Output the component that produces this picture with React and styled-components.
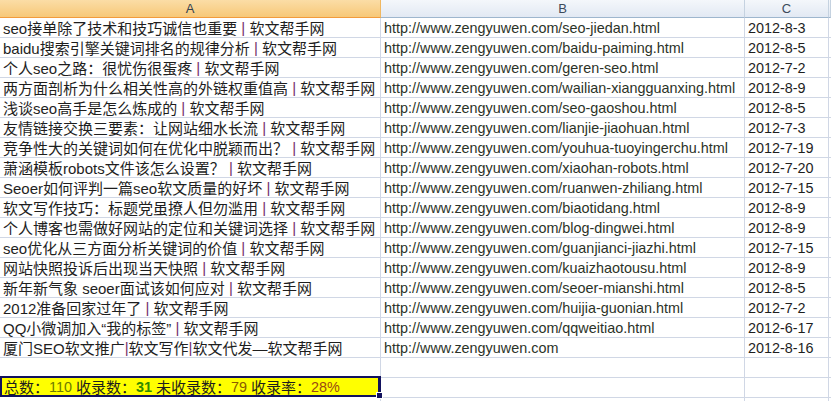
import React from "react";
import styled, { createGlobalStyle } from "styled-components";

const GlobalStyle = createGlobalStyle`
  html, body {
    margin: 0;
    padding: 0;
    background: #fff;
    overflow: hidden;
  }
`;

const SITE = "http://www.zengyuwen.com/";

const rows = [
  ["seo接单除了技术和技巧诚信也重要", "seo-jiedan.html", "2012-8-3"],
  ["baidu搜索引擎关键词排名的规律分析", "baidu-paiming.html", "2012-8-5"],
  ["个人seo之路：很忧伤很蛋疼", "geren-seo.html", "2012-7-2"],
  ["两方面剖析为什么相关性高的外链权重值高", "wailian-xiangguanxing.html", "2012-8-9"],
  ["浅谈seo高手是怎么炼成的", "seo-gaoshou.html", "2012-8-5"],
  ["友情链接交换三要素：让网站细水长流", "lianjie-jiaohuan.html", "2012-7-3"],
  ["竞争性大的关键词如何在优化中脱颖而出？", "youhua-tuoyingerchu.html", "2012-7-19"],
  ["萧涵模板robots文件该怎么设置？", "xiaohan-robots.html", "2012-7-20"],
  ["Seoer如何评判一篇seo软文质量的好坏", "ruanwen-zhiliang.html", "2012-7-15"],
  ["软文写作技巧：标题党虽撩人但勿滥用", "biaotidang.html", "2012-8-9"],
  ["个人博客也需做好网站的定位和关键词选择", "blog-dingwei.html", "2012-8-9"],
  ["seo优化从三方面分析关键词的价值", "guanjianci-jiazhi.html", "2012-7-15"],
  ["网站快照投诉后出现当天快照", "kuaizhaotousu.html", "2012-8-9"],
  ["新年新气象 seoer面试该如何应对", "seoer-mianshi.html", "2012-8-5"],
  ["2012准备回家过年了", "huijia-guonian.html", "2012-7-2"],
  ["QQ小微调加入“我的标签”", "qqweitiao.html", "2012-6-17"],
];

const Sheet = styled.div`
  width: 831px;
  font-family: "Liberation Sans", "Noto Sans CJK SC", sans-serif;
  font-size: 15px;
  color: #1e1e1e;
`;

const Grid = styled.div`
  display: grid;
  grid-template-columns: 381px 364px 84px 2px;
`;

const HeadCell = styled.div`
  height: 17px;
  display: flex;
  align-items: center;
  justify-content: center;
  font-size: 13px;
  color: ${(p) => (p.$active ? "#34414f" : "#3c4a5b")};
  background: ${(p) =>
    p.$active
      ? "linear-gradient(#fbdda6, #f7c878)"
      : "linear-gradient(#f4f7fb, #e2e9f3)"};
  border-right: 1px solid ${(p) => (p.$active ? "#f0b760" : "#c5d2e0")};
  border-bottom: 1px solid ${(p) => (p.$active ? "#f29b3c" : "#9eb6ce")};
`;

const Cell = styled.div`
  height: 19px;
  padding: 0 3px;
  display: flex;
  align-items: center;
  white-space: pre;
  overflow: hidden;
  font-size: ${(p) => (p.$latin ? "14.4px" : "15px")};
  border-right: 1px solid #d0d7e5;
  border-bottom: 1px solid #d0d7e5;
  color: ${(p) => (p.$muted ? "#2c3328" : "#1e1e1e")};
`;

const Sep = styled.span`
  color: #74306c;
`;

const SummaryCell = styled.div`
  position: relative;
  height: 17px;
  margin-top: -2px;
  padding: 0 2px;
  display: flex;
  align-items: center;
  white-space: pre;
  background: #ffff00;
  border: 2px solid #12125e;
  border-right-width: 3px;
  z-index: 1;
`;

const Num = styled.span`
  font-size: 14.4px;
  color: ${(p) => p.$color};
  font-weight: ${(p) => (p.$bold ? 700 : 400)};
`;

const FillHandle = styled.span`
  position: absolute;
  right: -5px;
  bottom: -4px;
  width: 5px;
  height: 5px;
  background: #12125e;
  border: 1px solid #fff;
`;

const Title = ({ text }) => (
  <>
    {text} <Sep>|</Sep> 软文帮手网
  </>
);

const EmptyRow = () => (
  <>
    <Cell />
    <Cell />
    <Cell />
    <Cell />
  </>
);

export default function App() {
  return (
    <Sheet>
      <GlobalStyle />
      <Grid>
        <HeadCell $active>A</HeadCell>
        <HeadCell>B</HeadCell>
        <HeadCell>C</HeadCell>
        <HeadCell />

        {rows.map(([title, slug, date]) => (
          <React.Fragment key={slug}>
            <Cell>
              <Title text={title} />
            </Cell>
            <Cell $latin $muted>{SITE + slug}</Cell>
            <Cell $latin>{date}</Cell>
            <Cell />
          </React.Fragment>
        ))}

        <Cell>
          厦门SEO软文推广<Sep>|</Sep>软文写作<Sep>|</Sep>软文代发—软文帮手网
        </Cell>
        <Cell $latin $muted>http://www.zengyuwen.com</Cell>
        <Cell $latin>2012-8-16</Cell>
        <Cell />

        <EmptyRow />

        <SummaryCell>
          总数：<Num $color="#6e7a00">110 </Num>收录数：<Num $color="#2f8a00" $bold>31 </Num>未收录数：<Num $color="#8a5a00">79 </Num>收录率：<Num $color="#9a4a12">28%</Num>
          <FillHandle />
        </SummaryCell>
        <Cell />
        <Cell />
        <Cell />

        <EmptyRow />
      </Grid>
    </Sheet>
  );
}
